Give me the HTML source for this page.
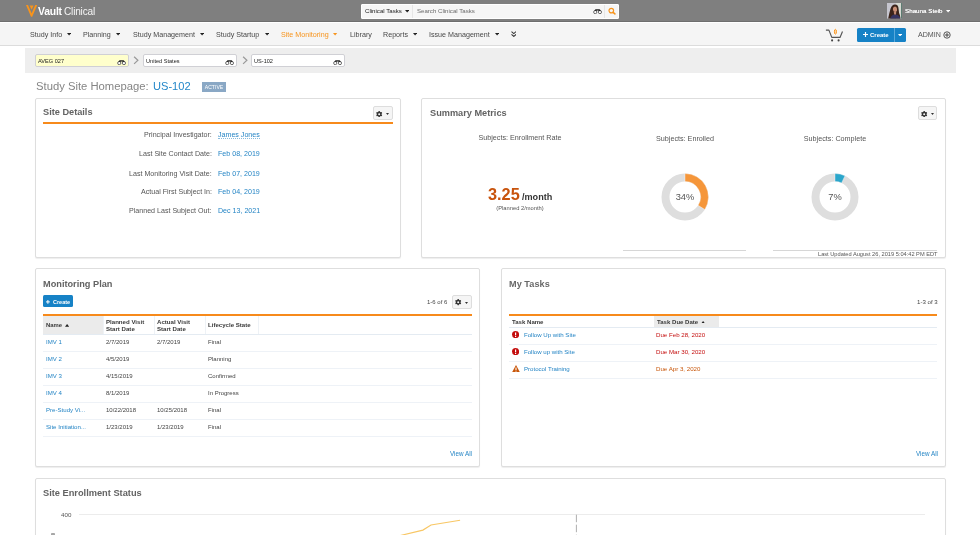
<!DOCTYPE html>
<html><head><meta charset="utf-8"><title>Vault Clinical</title>
<style>
html,body{margin:0;padding:0;background:#fff;}
body{width:980px;height:535px;overflow:hidden;position:relative;font-family:"Liberation Sans",sans-serif;}
.t{will-change:transform;}
.t{position:absolute;white-space:nowrap;}
.b{position:absolute;display:block;}
</style></head><body>
<div class="b" style="left:0px;top:0px;width:980px;height:22px;background:#7f7f7f;"></div>
<div class="b" style="left:0px;top:20.5px;width:980px;height:1.5px;background:#6e6e6e;"></div>
<svg class="b" style="left:25.9px;top:5.1px" width="11.2" height="11.8" viewBox="0 0 11.2 11.8"><path d="M0 0 H2.0 L5.6 8.3 L9.2 0 H11.2 L6.2 11.7 H5.0 Z" fill="#f7941d"/><path d="M3.6 0.5 H7.6 L5.6 4.7 Z" fill="#f7941d"/></svg>
<div class="t" style="top:6.00px;font-size:10.4px;line-height:12px;color:#fff;font-weight:bold;letter-spacing:-0.2px;left:38px;">Vault</div>
<div class="t" style="top:6.00px;font-size:10.1px;line-height:12px;color:#f4f4f4;letter-spacing:-0.2px;left:64.4px;">Clinical</div>
<div class="b" style="left:361.3px;top:4px;width:257.7px;height:14.6px;background:#f6f6f6;border:1px solid #fff;box-sizing:border-box;border-radius:1px;"></div>
<div class="b" style="left:412.2px;top:5px;width:0.8px;height:12.6px;background:#e6e6e6;"></div>
<div class="b" style="left:604.2px;top:5px;width:0.8px;height:12.6px;background:#e6e6e6;"></div>
<div class="t" style="top:5.00px;font-size:6.1px;line-height:12px;color:#222;left:364.7px;">Clinical Tasks</div>
<svg class="b" style="left:404.6px;top:10.1px" width="4.4" height="2.6" viewBox="0 0 4.4 2.6"><path d="M0 0H4.4L2.2 2.6Z" fill="#222"/></svg>
<div class="t" style="top:5.00px;font-size:6.1px;line-height:12px;color:#6a6a6a;left:416.5px;">Search Clinical Tasks</div>
<svg class="b" style="left:592.70px;top:9.10px" width="9.20" height="5.20" viewBox="0 0 9.2 5.2"><circle cx="2.25" cy="3.1" r="1.6" fill="#fff" stroke="#606060" stroke-width="0.95"/><circle cx="6.95" cy="3.1" r="1.6" fill="#fff" stroke="#606060" stroke-width="0.95"/><path d="M1.3 1.6 L2.6 0.15 H6.6 L7.9 1.6 L6.4 1.9 L4.6 1.5 L2.8 1.9 Z" fill="#222"/></svg>
<svg class="b" style="left:607px;top:6px" width="10" height="10" viewBox="0 0 10 10"><circle cx="4.3" cy="4.6" r="2.3" fill="none" stroke="#f7941d" stroke-width="1.2"/><path d="M6.1 6.4 L7.9 7.9" stroke="#f7941d" stroke-width="1.55" stroke-linecap="round"/></svg>
<svg class="b" style="left:886.9px;top:3.3px" width="15.3" height="15.6" viewBox="0 0 15.3 15.6"><rect width="15.3" height="15.6" fill="#c6c6cf"/><rect x="9" width="5.3" height="15.6" fill="#d4d8d0"/><rect x="14.3" width="1" height="15.6" fill="#2f5a4a"/><path d="M1.2 15.6 Q2.5 9 3.6 5.5 Q5 1.6 8 1.6 Q11.4 1.6 11.6 6 Q11.8 10 13 12.5 L13.4 15.6Z" fill="#3b241b"/><ellipse cx="8" cy="6.3" rx="2.1" ry="2.7" fill="#c99078" transform="rotate(-12 8 6.3)"/><path d="M3.2 15.6 Q4.5 11.2 8.2 11.4 Q12.6 11.6 13.6 15.6Z" fill="#353461"/><path d="M6.8 9 L9.2 8.8 L9 11.6 L7.2 11.6Z" fill="#c08a72"/></svg>
<div class="t" style="top:5.00px;font-size:6.25px;line-height:12px;color:#fff;left:905px;text-shadow:0 0 0.6px rgba(255,255,255,0.9);">Shauna Steib</div>
<svg class="b" style="left:945.9px;top:10.25px" width="4.2" height="2.5" viewBox="0 0 4.2 2.5"><path d="M0 0H4.2L2.1 2.5Z" fill="#fff"/></svg>
<div class="b" style="left:0px;top:22px;width:980px;height:23px;background:#f5f5f5;"></div>
<div class="b" style="left:0px;top:22px;width:980px;height:0.6px;background:#fff;"></div>
<div class="b" style="left:0px;top:45px;width:980px;height:1px;background:#dcdcdc;"></div>
<div class="t" style="top:29.00px;font-size:7.15px;line-height:12px;color:#484848;left:29.6px;">Study Info</div>
<svg class="b" style="left:67.0px;top:33.4px" width="4.2" height="2.6" viewBox="0 0 4.2 2.6"><path d="M0 0H4.2L2.1 2.6Z" fill="#222"/></svg>
<div class="t" style="top:29.00px;font-size:7.15px;line-height:12px;color:#484848;left:83.3px;">Planning</div>
<svg class="b" style="left:116.1px;top:33.4px" width="4.2" height="2.6" viewBox="0 0 4.2 2.6"><path d="M0 0H4.2L2.1 2.6Z" fill="#222"/></svg>
<div class="t" style="top:29.00px;font-size:7.15px;line-height:12px;color:#484848;left:132.5px;">Study Management</div>
<svg class="b" style="left:199.9px;top:33.4px" width="4.2" height="2.6" viewBox="0 0 4.2 2.6"><path d="M0 0H4.2L2.1 2.6Z" fill="#222"/></svg>
<div class="t" style="top:29.00px;font-size:7.15px;line-height:12px;color:#484848;left:216px;">Study Startup</div>
<svg class="b" style="left:264.7px;top:33.4px" width="4.2" height="2.6" viewBox="0 0 4.2 2.6"><path d="M0 0H4.2L2.1 2.6Z" fill="#222"/></svg>
<div class="t" style="top:29.00px;font-size:7.15px;line-height:12px;color:#f7941d;left:281px;">Site Monitoring</div>
<svg class="b" style="left:333.4px;top:33.4px" width="4.2" height="2.6" viewBox="0 0 4.2 2.6"><path d="M0 0H4.2L2.1 2.6Z" fill="#f7941d"/></svg>
<div class="t" style="top:29.00px;font-size:7.15px;line-height:12px;color:#484848;left:350px;">Library</div>
<div class="t" style="top:29.00px;font-size:7.15px;line-height:12px;color:#484848;left:382.6px;">Reports</div>
<svg class="b" style="left:412.8px;top:33.4px" width="4.2" height="2.6" viewBox="0 0 4.2 2.6"><path d="M0 0H4.2L2.1 2.6Z" fill="#222"/></svg>
<div class="t" style="top:29.00px;font-size:7.15px;line-height:12px;color:#484848;left:428.5px;">Issue Management</div>
<svg class="b" style="left:494.9px;top:33.4px" width="4.2" height="2.6" viewBox="0 0 4.2 2.6"><path d="M0 0H4.2L2.1 2.6Z" fill="#222"/></svg>
<svg class="b" style="left:510.7px;top:31.3px" width="5.6" height="6.2" viewBox="0 0 5.6 6.2"><path d="M0.5 0.6 L2.8 2.6 L5.1 0.6 M0.5 3.4 L2.8 5.4 L5.1 3.4" fill="none" stroke="#333" stroke-width="1.05"/></svg>
<svg class="b" style="left:824px;top:28px" width="20" height="14" viewBox="0 0 20 14"><path d="M1.9 2.1 H4.9 L7.8 9.4 H16 L18.5 3.6" fill="none" stroke="#555" stroke-width="1.15" stroke-linejoin="round"/><circle cx="8.1" cy="12.4" r="1.05" fill="#444"/><circle cx="14.6" cy="12.4" r="1.05" fill="#444"/></svg>
<svg class="b" style="left:832px;top:28px" width="7" height="8" viewBox="0 0 7 8"><ellipse cx="3.4" cy="3.75" rx="1.05" ry="2.45" fill="none" stroke="#fff" stroke-width="2.2" opacity="0.7"/><ellipse cx="3.4" cy="3.75" rx="1.05" ry="2.45" fill="#fbd9ae" stroke="#f7941d" stroke-width="0.95"/></svg>
<div class="b" style="left:857px;top:28.3px;width:48.5px;height:13.3px;background:#1682c6;border-radius:1.5px;"></div>
<div class="b" style="left:894px;top:28.3px;width:0.6px;height:13.3px;background:#5aa9db;"></div>
<svg class="b" style="left:863px;top:32px" width="5" height="5" viewBox="0 0 5 5"><path d="M2.5 0V5M0 2.5H5" stroke="#fff" stroke-width="1.15"/></svg>
<div class="t" style="top:29.00px;font-size:6.0px;line-height:12px;color:#fff;font-weight:bold;left:870.2px;">Create</div>
<svg class="b" style="left:897.9px;top:33.75px" width="4.2" height="2.5" viewBox="0 0 4.2 2.5"><path d="M0 0H4.2L2.1 2.5Z" fill="#fff"/></svg>
<div class="t" style="top:29.00px;font-size:7.1px;line-height:12px;color:#555;left:918px;">ADMIN</div>
<svg class="b" style="left:943px;top:31px" width="8" height="8" viewBox="0 0 8 8"><circle cx="4" cy="4" r="3.2" fill="none" stroke="#444" stroke-width="0.9"/><path d="M4 2.1V5.9M2.1 4H5.9" stroke="#444" stroke-width="1"/></svg>
<div class="b" style="left:25px;top:48px;width:931px;height:25px;background:#eeeeee;"></div>
<div class="b" style="left:35px;top:54.3px;width:93.5px;height:13px;background:#ffffcc;border:1px solid #d0d0d5;border-radius:2px;box-sizing:border-box;"></div>
<div class="t" style="top:55.00px;font-size:5.6px;line-height:12px;color:#222;left:38.4px;">AVEG 027</div>
<svg class="b" style="left:116.60px;top:59.80px" width="9.20" height="5.20" viewBox="0 0 9.2 5.2"><circle cx="2.25" cy="3.1" r="1.6" fill="#fff" stroke="#606060" stroke-width="0.95"/><circle cx="6.95" cy="3.1" r="1.6" fill="#fff" stroke="#606060" stroke-width="0.95"/><path d="M1.3 1.6 L2.6 0.15 H6.6 L7.9 1.6 L6.4 1.9 L4.6 1.5 L2.8 1.9 Z" fill="#222"/></svg>
<div class="b" style="left:143px;top:54.3px;width:94px;height:13px;background:#fff;border:1px solid #d0d0d5;border-radius:2px;box-sizing:border-box;"></div>
<div class="t" style="top:55.00px;font-size:5.6px;line-height:12px;color:#222;left:146.4px;">United States</div>
<svg class="b" style="left:224.70px;top:59.80px" width="9.20" height="5.20" viewBox="0 0 9.2 5.2"><circle cx="2.25" cy="3.1" r="1.6" fill="#fff" stroke="#606060" stroke-width="0.95"/><circle cx="6.95" cy="3.1" r="1.6" fill="#fff" stroke="#606060" stroke-width="0.95"/><path d="M1.3 1.6 L2.6 0.15 H6.6 L7.9 1.6 L6.4 1.9 L4.6 1.5 L2.8 1.9 Z" fill="#222"/></svg>
<div class="b" style="left:251px;top:54.3px;width:94.3px;height:13px;background:#fff;border:1px solid #d0d0d5;border-radius:2px;box-sizing:border-box;"></div>
<div class="t" style="top:55.00px;font-size:5.6px;line-height:12px;color:#222;left:254.4px;">US-102</div>
<svg class="b" style="left:333.00px;top:59.80px" width="9.20" height="5.20" viewBox="0 0 9.2 5.2"><circle cx="2.25" cy="3.1" r="1.6" fill="#fff" stroke="#606060" stroke-width="0.95"/><circle cx="6.95" cy="3.1" r="1.6" fill="#fff" stroke="#606060" stroke-width="0.95"/><path d="M1.3 1.6 L2.6 0.15 H6.6 L7.9 1.6 L6.4 1.9 L4.6 1.5 L2.8 1.9 Z" fill="#222"/></svg>
<svg class="b" style="left:133.4px;top:56.2px" width="6" height="9" viewBox="0 0 6 9"><path d="M1.1 0.7 L4.9 4.2 L1.1 7.9" fill="none" stroke="#999" stroke-width="1.2"/></svg>
<svg class="b" style="left:241.6px;top:56.2px" width="6" height="9" viewBox="0 0 6 9"><path d="M1.1 0.7 L4.9 4.2 L1.1 7.9" fill="none" stroke="#999" stroke-width="1.2"/></svg>
<div class="t" style="top:79.00px;font-size:11.25px;line-height:14px;color:#858585;left:35.7px;">Study Site Homepage:</div>
<div class="t" style="top:79.00px;font-size:11.1px;line-height:14px;color:#2387c9;left:152.6px;">US-102</div>
<div class="b" style="left:202.2px;top:82.1px;width:24.2px;height:9.7px;background:#8aa8c5;"></div>
<div class="t" style="top:81.00px;font-size:5.1px;line-height:12px;color:#fff;left:64.3px;width:300px;text-align:center;">ACTIVE</div>
<div class="b" style="left:35px;top:98px;width:366px;height:160px;background:#fff;border:1px solid #dedede;border-radius:2px;box-sizing:border-box;box-shadow:0 1px 1px rgba(0,0,0,0.07);"></div>
<div class="t" style="top:106.00px;font-size:9.2px;line-height:12px;color:#636363;font-weight:bold;left:43.1px;">Site Details</div>
<div class="b" style="left:373.2px;top:106.4px;width:19.6px;height:13.4px;background:#f5f5f5;border:1px solid #ddd;border-radius:2px;box-sizing:border-box;"></div>
<svg class="b" style="left:376.3px;top:110.5px" width="6.4" height="6.4" viewBox="-1 -1 2 2"><path fill-rule="evenodd" d="M-0.23 -0.74 L-0.18 -0.98 L0.18 -0.98 L0.23 -0.74 L0.53 -0.57 L0.76 -0.65 L0.94 -0.34 L0.76 -0.17 L0.76 0.17 L0.94 0.34 L0.76 0.65 L0.53 0.57 L0.23 0.74 L0.18 0.98 L-0.18 0.98 L-0.23 0.74 L-0.53 0.57 L-0.76 0.65 L-0.94 0.34 L-0.76 0.17 L-0.76 -0.17 L-0.94 -0.34 L-0.76 -0.65 L-0.53 -0.57Z M0.32 0 A0.32 0.32 0 1 0 -0.32 0 A0.32 0.32 0 1 0 0.32 0Z" fill="#333"/></svg>
<svg class="b" style="left:386.0px;top:112.8px" width="3" height="2" viewBox="0 0 3 2"><path d="M0 0H3L1.5 2Z" fill="#333"/></svg>
<div class="b" style="left:43px;top:122.2px;width:349.8px;height:1.8px;background:#f78a1b;"></div>
<div class="t" style="top:129.00px;font-size:7.1px;line-height:12px;color:#555;right:768.2px;">Principal Investigator:</div>
<div class="t" style="top:129.00px;font-size:7.1px;line-height:12px;color:#2585c5;left:218.2px;">James Jones</div>
<div class="t" style="top:148.00px;font-size:7.1px;line-height:12px;color:#555;right:768.2px;">Last Site Contact Date:</div>
<div class="t" style="top:148.00px;font-size:7.1px;line-height:12px;color:#2585c5;left:218.2px;">Feb 08, 2019</div>
<div class="t" style="top:168.00px;font-size:7.1px;line-height:12px;color:#555;right:768.2px;">Last Monitoring Visit Date:</div>
<div class="t" style="top:168.00px;font-size:7.1px;line-height:12px;color:#2585c5;left:218.2px;">Feb 07, 2019</div>
<div class="t" style="top:186.00px;font-size:7.1px;line-height:12px;color:#555;right:768.2px;">Actual First Subject In:</div>
<div class="t" style="top:186.00px;font-size:7.1px;line-height:12px;color:#2585c5;left:218.2px;">Feb 04, 2019</div>
<div class="t" style="top:205.00px;font-size:7.1px;line-height:12px;color:#555;right:768.2px;">Planned Last Subject Out:</div>
<div class="t" style="top:205.00px;font-size:7.1px;line-height:12px;color:#2585c5;left:218.2px;">Dec 13, 2021</div>
<div class="b" style="left:218.2px;top:137.8px;width:41.8px;height:0.7px;border-top:0.7px dotted #2585c5;opacity:0.55;"></div>
<div class="b" style="left:421px;top:98px;width:525px;height:160px;background:#fff;border:1px solid #dedede;border-radius:2px;box-sizing:border-box;box-shadow:0 1px 1px rgba(0,0,0,0.07);"></div>
<div class="t" style="top:107.00px;font-size:9.2px;line-height:12px;color:#636363;font-weight:bold;left:429.7px;">Summary Metrics</div>
<div class="b" style="left:918.3px;top:106.4px;width:19px;height:13.4px;background:#f5f5f5;border:1px solid #ddd;border-radius:2px;box-sizing:border-box;"></div>
<svg class="b" style="left:921.4px;top:110.5px" width="6.4" height="6.4" viewBox="-1 -1 2 2"><path fill-rule="evenodd" d="M-0.23 -0.74 L-0.18 -0.98 L0.18 -0.98 L0.23 -0.74 L0.53 -0.57 L0.76 -0.65 L0.94 -0.34 L0.76 -0.17 L0.76 0.17 L0.94 0.34 L0.76 0.65 L0.53 0.57 L0.23 0.74 L0.18 0.98 L-0.18 0.98 L-0.23 0.74 L-0.53 0.57 L-0.76 0.65 L-0.94 0.34 L-0.76 0.17 L-0.76 -0.17 L-0.94 -0.34 L-0.76 -0.65 L-0.53 -0.57Z M0.32 0 A0.32 0.32 0 1 0 -0.32 0 A0.32 0.32 0 1 0 0.32 0Z" fill="#333"/></svg>
<svg class="b" style="left:931.1px;top:112.8px" width="3" height="2" viewBox="0 0 3 2"><path d="M0 0H3L1.5 2Z" fill="#333"/></svg>
<div class="t" style="top:132.00px;font-size:7.2px;line-height:12px;color:#555;left:369.6px;width:300px;text-align:center;">Subjects: Enrollment Rate</div>
<div class="t" style="top:133.00px;font-size:7.2px;line-height:12px;color:#555;left:535px;width:300px;text-align:center;">Subjects: Enrolled</div>
<div class="t" style="top:133.00px;font-size:7.2px;line-height:12px;color:#555;left:684.7px;width:300px;text-align:center;">Subjects: Complete</div>
<div class="t" style="top:185.00px;font-size:16.3px;line-height:18px;color:#c8530c;font-weight:bold;left:487.7px;">3.25</div>
<div class="t" style="top:191.00px;font-size:9.1px;line-height:12px;color:#333;font-weight:bold;left:521.5px;">/month</div>
<div class="t" style="top:202.00px;font-size:5.75px;line-height:12px;color:#555;left:369.5px;width:300px;text-align:center;">(Planned 2/month)</div>
<svg class="b" style="left:659.9px;top:171.6px" width="50" height="50" viewBox="-25 -25 50 50"><circle r="19.5" fill="none" stroke="#dedede" stroke-width="8.0"/><path d="M0 -23.5 A23.5 23.5 0 0 1 19.84 12.59 L13.09 8.3 A15.5 15.5 0 0 0 0 -15.5Z" fill="#f5963a" stroke="#fff" stroke-width="0.4"/></svg>
<div class="t" style="top:191.00px;font-size:9.3px;line-height:12px;color:#555;left:534.9px;width:300px;text-align:center;">34%</div>
<svg class="b" style="left:809.6px;top:171.6px" width="50" height="50" viewBox="-25 -25 50 50"><circle r="19.5" fill="none" stroke="#dedede" stroke-width="8.0"/><path d="M0 -23.5 A23.5 23.5 0 0 1 10.01 -21.26 L6.6 -14.03 A15.5 15.5 0 0 0 0 -15.5Z" fill="#2ba6cb" stroke="#fff" stroke-width="0.4"/></svg>
<div class="t" style="top:191.00px;font-size:9.3px;line-height:12px;color:#555;left:684.6px;width:300px;text-align:center;">7%</div>
<div class="b" style="left:623.4px;top:250px;width:122.3px;height:0.6px;background:#d6d6d6;"></div>
<div class="b" style="left:773.4px;top:250px;width:164.1px;height:0.6px;background:#d6d6d6;"></div>
<div class="t" style="top:248.00px;font-size:5.67px;line-height:12px;color:#555;right:42.5px;">Last Updated August 26, 2019 5:04:42 PM EDT</div>
<div class="b" style="left:35px;top:268px;width:445px;height:199px;background:#fff;border:1px solid #dedede;border-radius:2px;box-sizing:border-box;box-shadow:0 1px 1px rgba(0,0,0,0.07);"></div>
<div class="t" style="top:278.00px;font-size:9.2px;line-height:12px;color:#636363;font-weight:bold;left:43.2px;">Monitoring Plan</div>
<div class="b" style="left:43px;top:295.4px;width:30.2px;height:11.8px;background:#1682c6;border-radius:1.5px;"></div>
<svg class="b" style="left:46.3px;top:300px" width="3.8" height="3.8" viewBox="0 0 3.8 3.8"><path d="M1.9 0V3.8M0 1.9H3.8" stroke="#fff" stroke-width="1"/></svg>
<div class="t" style="top:296.00px;font-size:5.5px;line-height:12px;color:#fff;font-weight:bold;left:52.8px;">Create</div>
<div class="t" style="top:296.00px;font-size:6px;line-height:12px;color:#444;right:532.8px;">1-6 of 6</div>
<div class="b" style="left:452.3px;top:295.4px;width:19.5px;height:13.3px;background:#f5f5f5;border:1px solid #ddd;border-radius:2px;box-sizing:border-box;"></div>
<svg class="b" style="left:455.4px;top:299.45px" width="6.4" height="6.4" viewBox="-1 -1 2 2"><path fill-rule="evenodd" d="M-0.23 -0.74 L-0.18 -0.98 L0.18 -0.98 L0.23 -0.74 L0.53 -0.57 L0.76 -0.65 L0.94 -0.34 L0.76 -0.17 L0.76 0.17 L0.94 0.34 L0.76 0.65 L0.53 0.57 L0.23 0.74 L0.18 0.98 L-0.18 0.98 L-0.23 0.74 L-0.53 0.57 L-0.76 0.65 L-0.94 0.34 L-0.76 0.17 L-0.76 -0.17 L-0.94 -0.34 L-0.76 -0.65 L-0.53 -0.57Z M0.32 0 A0.32 0.32 0 1 0 -0.32 0 A0.32 0.32 0 1 0 0.32 0Z" fill="#333"/></svg>
<svg class="b" style="left:465.1px;top:301.75px" width="3" height="2" viewBox="0 0 3 2"><path d="M0 0H3L1.5 2Z" fill="#333"/></svg>
<div class="b" style="left:43px;top:313.8px;width:429px;height:1.8px;background:#f78a1b;"></div>
<div class="b" style="left:43px;top:315.6px;width:59.5px;height:18.6px;background:#ebebeb;"></div>
<div class="b" style="left:43px;top:334.2px;width:429px;height:0.7px;background:#e4ebf2;"></div>
<div class="b" style="left:102.5px;top:315.6px;width:0.7px;height:18.6px;background:#eef2f6;"></div>
<div class="b" style="left:153.8px;top:315.6px;width:0.7px;height:18.6px;background:#eef2f6;"></div>
<div class="b" style="left:205.3px;top:315.6px;width:0.7px;height:18.6px;background:#eef2f6;"></div>
<div class="b" style="left:257.5px;top:315.6px;width:0.7px;height:18.6px;background:#eef2f6;"></div>
<div class="t" style="top:319.00px;font-size:5.9px;line-height:12px;color:#3a3a3a;font-weight:bold;left:45.8px;">Name</div>
<svg class="b" style="left:64.8px;top:324.2px" width="4.2" height="2.7" viewBox="0 0 4.2 2.7"><path d="M0 2.7H4.2L2.1 0Z" fill="#222"/></svg>
<div class="t" style="top:316.00px;font-size:6.1px;line-height:12px;color:#3a3a3a;font-weight:bold;left:105.6px;">Planned Visit</div>
<div class="t" style="top:323.00px;font-size:6.1px;line-height:12px;color:#3a3a3a;font-weight:bold;left:105.6px;">Start Date</div>
<div class="t" style="top:316.00px;font-size:6.1px;line-height:12px;color:#3a3a3a;font-weight:bold;left:157.1px;">Actual Visit</div>
<div class="t" style="top:323.00px;font-size:6.1px;line-height:12px;color:#3a3a3a;font-weight:bold;left:157.1px;">Start Date</div>
<div class="t" style="top:319.00px;font-size:6.1px;line-height:12px;color:#3a3a3a;font-weight:bold;left:208.2px;">Lifecycle State</div>
<div class="t" style="top:336.00px;font-size:6.1px;line-height:12px;color:#2585c5;left:45.8px;">IMV 1</div>
<div class="t" style="top:336.00px;font-size:6.0px;line-height:12px;color:#444;left:105.6px;">2/7/2019</div>
<div class="t" style="top:336.00px;font-size:6.0px;line-height:12px;color:#444;left:157.1px;">2/7/2019</div>
<div class="t" style="top:336.00px;font-size:6.0px;line-height:12px;color:#444;left:208.2px;">Final</div>
<div class="b" style="left:43px;top:351px;width:429px;height:0.7px;background:#eef2f7;"></div>
<div class="t" style="top:353.00px;font-size:6.1px;line-height:12px;color:#2585c5;left:45.8px;">IMV 2</div>
<div class="t" style="top:353.00px;font-size:6.0px;line-height:12px;color:#444;left:105.6px;">4/5/2019</div>
<div class="t" style="top:353.00px;font-size:6.0px;line-height:12px;color:#444;left:208.2px;">Planning</div>
<div class="b" style="left:43px;top:368.05px;width:429px;height:0.7px;background:#eef2f7;"></div>
<div class="t" style="top:370.00px;font-size:6.1px;line-height:12px;color:#2585c5;left:45.8px;">IMV 3</div>
<div class="t" style="top:370.00px;font-size:6.0px;line-height:12px;color:#444;left:105.6px;">4/15/2019</div>
<div class="t" style="top:370.00px;font-size:6.0px;line-height:12px;color:#444;left:208.2px;">Confirmed</div>
<div class="b" style="left:43px;top:385.1px;width:429px;height:0.7px;background:#eef2f7;"></div>
<div class="t" style="top:387.00px;font-size:6.1px;line-height:12px;color:#2585c5;left:45.8px;">IMV 4</div>
<div class="t" style="top:387.00px;font-size:6.0px;line-height:12px;color:#444;left:105.6px;">8/1/2019</div>
<div class="t" style="top:387.00px;font-size:6.0px;line-height:12px;color:#444;left:208.2px;">In Progress</div>
<div class="b" style="left:43px;top:402.15px;width:429px;height:0.7px;background:#eef2f7;"></div>
<div class="t" style="top:404.00px;font-size:6.1px;line-height:12px;color:#2585c5;left:45.8px;">Pre-Study Vi...</div>
<div class="t" style="top:404.00px;font-size:6.0px;line-height:12px;color:#444;left:105.6px;">10/22/2018</div>
<div class="t" style="top:404.00px;font-size:6.0px;line-height:12px;color:#444;left:157.1px;">10/25/2018</div>
<div class="t" style="top:404.00px;font-size:6.0px;line-height:12px;color:#444;left:208.2px;">Final</div>
<div class="b" style="left:43px;top:419.2px;width:429px;height:0.7px;background:#eef2f7;"></div>
<div class="t" style="top:421.00px;font-size:6.1px;line-height:12px;color:#2585c5;left:45.8px;">Site Initiation...</div>
<div class="t" style="top:421.00px;font-size:6.0px;line-height:12px;color:#444;left:105.6px;">1/23/2019</div>
<div class="t" style="top:421.00px;font-size:6.0px;line-height:12px;color:#444;left:157.1px;">1/23/2019</div>
<div class="t" style="top:421.00px;font-size:6.0px;line-height:12px;color:#444;left:208.2px;">Final</div>
<div class="b" style="left:43px;top:436.25px;width:429px;height:0.7px;background:#eef2f7;"></div>
<div class="t" style="top:448.00px;font-size:6.3px;line-height:12px;color:#2585c5;right:508px;">View All</div>
<div class="b" style="left:501px;top:268px;width:445px;height:199px;background:#fff;border:1px solid #dedede;border-radius:2px;box-sizing:border-box;box-shadow:0 1px 1px rgba(0,0,0,0.07);"></div>
<div class="t" style="top:278.00px;font-size:9.1px;line-height:12px;color:#686868;font-weight:bold;letter-spacing:0.06px;left:509.2px;">My Tasks</div>
<div class="t" style="top:296.00px;font-size:6.1px;line-height:12px;color:#444;right:42.5px;">1-3 of 3</div>
<div class="b" style="left:509px;top:313.8px;width:428.3px;height:1.9px;background:#f78a1b;"></div>
<div class="b" style="left:653.8px;top:315.7px;width:65.4px;height:11.3px;background:#ebebeb;"></div>
<div class="b" style="left:509px;top:327px;width:428.3px;height:0.7px;background:#e4ebf2;"></div>
<div class="t" style="top:316.00px;font-size:6.05px;line-height:12px;color:#3a3a3a;font-weight:bold;left:511.6px;">Task Name</div>
<div class="t" style="top:316.00px;font-size:6.05px;line-height:12px;color:#3a3a3a;font-weight:bold;left:656.6px;">Task Due Date</div>
<svg class="b" style="left:700.5px;top:320.6px" width="4.2" height="2.7" viewBox="0 0 4.2 2.7"><path d="M0 2.7H4.2L2.1 0Z" fill="#222"/></svg>
<svg class="b" style="left:511.8px;top:331.2px" width="7.2" height="7.2" viewBox="0 0 8 8"><circle cx="4" cy="4" r="4" fill="#c40d0d"/><path d="M4 1.6V4.6" stroke="#fff" stroke-width="1.3"/><circle cx="4" cy="6" r="0.75" fill="#fff"/></svg>
<div class="t" style="top:329.00px;font-size:6.1px;line-height:12px;color:#2585c5;left:523.8px;">Follow Up with Site</div>
<div class="t" style="top:329.00px;font-size:6.15px;line-height:12px;color:#c40d0d;left:655.8px;">Due Feb 28, 2020</div>
<div class="b" style="left:509px;top:344px;width:428.3px;height:0.7px;background:#eef2f7;"></div>
<svg class="b" style="left:511.8px;top:348.2px" width="7.2" height="7.2" viewBox="0 0 8 8"><circle cx="4" cy="4" r="4" fill="#c40d0d"/><path d="M4 1.6V4.6" stroke="#fff" stroke-width="1.3"/><circle cx="4" cy="6" r="0.75" fill="#fff"/></svg>
<div class="t" style="top:346.00px;font-size:6.1px;line-height:12px;color:#2585c5;left:523.8px;">Follow up with Site</div>
<div class="t" style="top:346.00px;font-size:6.15px;line-height:12px;color:#c40d0d;left:655.8px;">Due Mar 30, 2020</div>
<div class="b" style="left:509px;top:360.9px;width:428.3px;height:0.7px;background:#eef2f7;"></div>
<svg class="b" style="left:511.7px;top:364.9px" width="8" height="7.4" viewBox="0 0 8 7.4"><path d="M4 0 L8 7.4 H0Z" fill="#c8560a"/><path d="M4 2.4V5" stroke="#fff" stroke-width="1.1"/><circle cx="4" cy="6.1" r="0.6" fill="#fff"/></svg>
<div class="t" style="top:363.00px;font-size:6.1px;line-height:12px;color:#2585c5;left:523.8px;">Protocol Training</div>
<div class="t" style="top:363.00px;font-size:6.15px;line-height:12px;color:#c8560a;left:655.8px;">Due Apr 3, 2020</div>
<div class="b" style="left:509px;top:377.8px;width:428.3px;height:0.7px;background:#eef2f7;"></div>
<div class="t" style="top:448.00px;font-size:6.3px;line-height:12px;color:#2585c5;right:42px;">View All</div>
<div class="b" style="left:35px;top:477.5px;width:911px;height:82.5px;background:#fff;border:1px solid #dedede;border-radius:2px;box-sizing:border-box;box-shadow:0 1px 1px rgba(0,0,0,0.07);"></div>
<div class="t" style="top:487.00px;font-size:9.25px;line-height:12px;color:#636363;font-weight:bold;left:43.1px;">Site Enrollment Status</div>
<div class="t" style="top:509.00px;font-size:6.2px;line-height:12px;color:#555;right:909.1px;">400</div>
<div class="b" style="left:79px;top:514px;width:846px;height:0.7px;background:#ececec;"></div>
<svg class="b" style="left:380px;top:500px" width="240" height="35" viewBox="0 0 240 35"><path d="M16 36.6 L42.9 30.1 L51 25 L80.1 20.3" fill="none" stroke="#f8c765" stroke-width="1.15"/><path d="M196.4 14.7 V35" stroke="#999" stroke-width="0.8" stroke-dasharray="7.5 2.5"/></svg>
<div class="b" style="left:51.4px;top:533.2px;width:3.6px;height:1.8px;background:#8a8a8a;opacity:0.75;border-radius:0.8px 0.8px 0 0;"></div>
</body></html>
